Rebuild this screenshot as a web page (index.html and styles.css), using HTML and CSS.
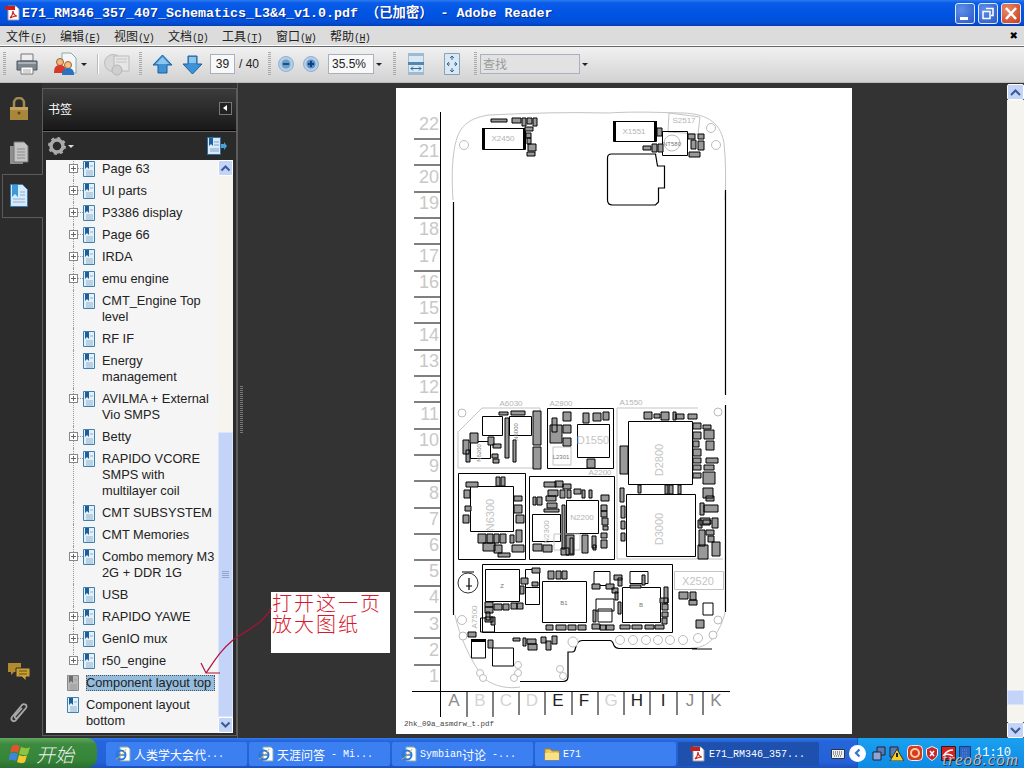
FILE: index.html
```html
<!DOCTYPE html>
<html lang="zh">
<head>
  <meta charset="UTF-8">
  <title>Adobe Reader</title>
  <link rel="stylesheet" href="styles.css">
</head>
<body>

<svg class="defs" width="0" height="0">
  <symbol id="pdf" viewBox="0 0 16 16">
    <path d="M3 1h8l3 3v11H3z" fill="#fff" stroke="#999"/>
    <path d="M0 1h10v4H0z" fill="#c8201c"/>
    <path d="M5 13c2-2 3-5 3-7 0 3 2 5 4 5-3 0-5 1-7 2z" fill="none" stroke="#d0201c" stroke-width="1.2"/>
  </symbol>
  <symbol id="mark" viewBox="0 0 12 16">
    <path d="M.5.5h11v15H.5z" fill="#e4f0f8" stroke="#3f80ad"/>
    <path d="M2 1h4v7L4 6 2 8z" fill="#1c5f9c"/>
    <path d="M7 5h3M3 10h7M3 12h7M3 14h7" stroke="#8db2cf"/>
  </symbol>
  <symbol id="mark-off" viewBox="0 0 12 16">
    <path d="M.5.5h11v15H.5z" fill="#b8b8b8" stroke="#8a8a8a"/>
    <path d="M2 1h4v7L4 6 2 8z" fill="#6c6c6c"/>
    <path d="M7 5h3M3 10h7M3 12h7M3 14h7" stroke="#9a9a9a"/>
  </symbol>
  <symbol id="ie" viewBox="0 0 16 16">
    <path d="M5 1h8l2 2v12H5z" fill="#fff" stroke="#8aa"/>
    <circle cx="6" cy="9" r="4.500" fill="none" stroke="#2a78d8" stroke-width="2"/>
    <path d="M2 9h8" stroke="#2a78d8" stroke-width="1.500"/>
    <path d="M1 13c3-1 8-6 10-10" fill="none" stroke="#e0b030"/>
  </symbol>
</svg>

<div class="titlebar">
  <svg class="title-icon"><use href="#pdf"/></svg>
  <span class="title-text">E71_RM346_357_407_Schematics_L3&amp;4_v1.0.pdf （已加密） - Adobe Reader</span>
  <div class="win-btns">
    <div class="win-btn"><svg width="20" height="21"><path d="M5 14h8v3H5z" fill="#fff"/></svg></div>
    <div class="win-btn"><svg width="20" height="21"><path d="M8 5.500h7v7h-2M5 8.500h7v7H5z" fill="none" stroke="#fff" stroke-width="1.500"/></svg></div>
    <div class="win-btn close"><svg width="20" height="21"><path d="M5 5l10 11M15 5L5 16" stroke="#fff" stroke-width="2.500"/></svg></div>
  </div>
</div>

<div class="menubar">
  <span class="menu">文件<small>(<u>F</u>)</small></span>
  <span class="menu">编辑<small>(<u>E</u>)</small></span>
  <span class="menu">视图<small>(<u>V</u>)</small></span>
  <span class="menu">文档<small>(<u>D</u>)</small></span>
  <span class="menu">工具<small>(<u>T</u>)</small></span>
  <span class="menu">窗口<small>(<u>W</u>)</small></span>
  <span class="menu">帮助<small>(<u>H</u>)</small></span>
  <span class="menu-close">✖</span>
</div>

<div class="toolbar">
  <div class="grip first"></div>
  <svg class="tool print" width="22" height="22" viewBox="0 0 22 22">
    <path d="M5 1h12v7H5z" fill="#eee" stroke="#777"/>
    <path d="M1 8h20v9H1z" fill="#7d8790" stroke="#4c545c"/>
    <path d="M2 9h18v2H2z" fill="#aab2ba"/>
    <path d="M5 14h12v7H5z" fill="#fff" stroke="#777"/>
    <path d="M7 17h8M7 19h8" stroke="#aaa"/>
  </svg>
  <svg class="tool review" width="24" height="24" viewBox="0 0 24 24">
    <path d="M9 1h9l5 5v15H9z" fill="#f4f6fa" stroke="#8aa"/>
    <circle cx="7" cy="10" r="3.500" fill="#f0b878" stroke="#a06030"/>
    <path d="M1 21c0-6 2-8 6-8s6 2 6 8z" fill="#d83828"/>
    <circle cx="15" cy="13" r="3.500" fill="#f4c080" stroke="#a06030"/>
    <path d="M9 23c0-5 2-7 6-7s6 2 6 7z" fill="#2c70c0"/>
  </svg>
  <span class="caret after-review"></span>
  <div class="sep"></div>
  <svg class="tool globe" width="26" height="24" viewBox="0 0 26 24">
    <circle cx="9" cy="11" r="8.500" fill="#d8d8d8" stroke="#bbb"/>
    <path d="M10 4h15v15H10z" fill="#e6e6e6" stroke="#bbb"/>
    <path d="M12 7h11M12 10h11" stroke="#c4c4c4"/>
    <circle cx="13" cy="18" r="5" fill="#cfcfcf" stroke="#b4b4b4"/>
  </svg>
  <div class="grip"></div>
  <svg class="tool nav-up" width="21" height="21" viewBox="0 0 21 21"><path d="M10.500 1L20 11h-5v8H6v-8H1z" fill="#3d93d6" stroke="#1d5f9e"/><path d="M10.500 3L17 10H4z" fill="#8cc6ec"/></svg>
  <svg class="tool nav-down" width="21" height="21" viewBox="0 0 21 21"><path d="M10.500 20L20 10h-5V2H6v8H1z" fill="#3d93d6" stroke="#1d5f9e"/><path d="M7 3h7v6H7z" fill="#8cc6ec"/></svg>
  <div class="field page-no">39</div>
  <span class="page-total">/ 40</span>
  <div class="grip"></div>
  <svg class="tool zoom-out" width="16" height="16" viewBox="0 0 16 16"><circle cx="8" cy="8" r="7.500" fill="#b3cfe8" stroke="#8fb0cc"/><circle cx="8" cy="8" r="4.500" fill="#6e9cc8"/><path d="M5 8h6" stroke="#1d4f80" stroke-width="2"/></svg>
  <svg class="tool zoom-in" width="16" height="16" viewBox="0 0 16 16"><circle cx="8" cy="8" r="7.500" fill="#b3cfe8" stroke="#8fb0cc"/><circle cx="8" cy="8" r="4.500" fill="#5a8cc4"/><path d="M5 8h6M8 5v6" stroke="#123f80" stroke-width="2"/></svg>
  <div class="field zoom-val">35.5%</div>
  <span class="caret after-zoom"></span>
  <div class="grip"></div>
  <svg class="tool fit-width" width="16" height="22" viewBox="0 0 16 22">
    <path d="M.5.5h15v21H.5z" fill="#dbe8f2" stroke="#a8bccc"/>
    <path d="M0 9h16v3H0z" fill="#4f88b4"/>
    <path d="M0 0h16v3H0zM0 19h16v3H0z" fill="#9dbbd2"/>
    <path d="M3 15.500h10M3 15.500l2-2M3 15.500l2 2M13 15.500l-2-2M13 15.500l-2 2" stroke="#2c6a9c" fill="none"/>
  </svg>
  <svg class="tool fit-page" width="16" height="22" viewBox="0 0 16 22">
    <path d="M.5.5h15v21H.5z" fill="#dbe8f2" stroke="#7ea4c2"/>
    <path d="M8 3v4M8 15v4M3 11h3M10 11h3M8 3L6 5M8 3l2 2M8 19l-2-2M8 19l2-2M3 11l2-2M3 11l2 2M13 11l-2-2M13 11l-2 2" stroke="#2c6a9c" fill="none"/>
  </svg>
  <div class="grip"></div>
  <div class="field search">查找</div>
  <span class="caret after-search"></span>
</div>

<div class="workspace">
  <div class="rail">
    <svg class="rail-icon lock" width="20" height="24" viewBox="0 0 20 24">
      <path d="M5 11V6a5 5 0 0 1 10 0v5" fill="none" stroke="#a08a50" stroke-width="2.500"/>
      <path d="M1 10h18v13H1z" fill="#a8863c"/>
      <path d="M1 10h18v3H1z" fill="#c4a45c"/>
      <circle cx="10" cy="16" r="1.500" fill="#5c4818"/>
    </svg>
    <svg class="rail-icon pages" width="20" height="24" viewBox="0 0 20 24">
      <path d="M1 5h11l2 2v16H1z" fill="#8e8e8e"/>
      <path d="M5 1h10l4 4v16H5z" fill="#c4c4c4" stroke="#777"/>
      <path d="M8 8h8M8 11h8M8 14h8M8 17h8" stroke="#8a8a8a"/>
    </svg>
    <div class="rail-tab">
      <svg width="18" height="23" viewBox="0 0 18 23">
        <path d="M.5.500h12l5 5v17H.5z" fill="#d8eafa" stroke="#3a78b0"/>
        <path d="M2 1h6v12l-3-3-3 3z" fill="#3c9ad8"/>
        <path d="M10 8h5M10 11h5M3 15h12M3 18h12" stroke="#8cb0d0"/>
      </svg>
    </div>
    <svg class="rail-icon comment" width="24" height="20" viewBox="0 0 24 20">
      <path d="M1 1h13v9H7l-3 3v-3H1z" fill="#b08a2c"/>
      <path d="M9 6h14v9h-4v4l-4-4H9z" fill="#c8a038" stroke="#2e2e2e"/>
      <path d="M12 9h8M12 12h8" stroke="#6a5010"/>
    </svg>
    <svg class="rail-icon clip" width="20" height="24" viewBox="0 0 20 24">
      <path d="M17 6L7 18c-2 3-6 0-4-3L13 3c2-2 6 0 4 3L8 16c-1 1-3 0-2-2l7-8" fill="none" stroke="#a8a8a8" stroke-width="1.800"/>
    </svg>
  </div>

  <div class="panel">
    <div class="panel-head">
      <span class="panel-title">书签</span>
      <span class="collapse"></span>
    </div>
    <div class="panel-tools">
      <svg width="18" height="18" viewBox="0 0 18 18">
        <circle cx="9" cy="9" r="6" fill="none" stroke="#aaa" stroke-width="3.500"/>
        <circle cx="9" cy="9" r="8" fill="none" stroke="#aaa" stroke-width="2" stroke-dasharray="3 3.300"/>
      </svg>
      <span class="caret light"></span>
      <svg class="export" width="20" height="18" viewBox="0 0 20 18">
        <path d="M.5.500h13v17H.5z" fill="#d8eafa" stroke="#2a6fa8"/>
        <path d="M2 1h4v8L4 7 2 9z" fill="#1c5f9c"/>
        <path d="M7 5h5M7 8h5M3 12h9M3 14h9" stroke="#7fa6c6"/>
        <path d="M14 7h3V5l3 4-3 4v-2h-3z" fill="#4aa0d8"/>
      </svg>
    </div>
    <div class="list">
      <div class="tree">
        <div class="row sub first"><i class="plus"></i><svg class="mk"><use href="#mark"/></svg><span>Page 63</span></div>
        <div class="row sub"><i class="plus"></i><svg class="mk"><use href="#mark"/></svg><span>UI parts</span></div>
        <div class="row sub"><i class="plus"></i><svg class="mk"><use href="#mark"/></svg><span>P3386 display</span></div>
        <div class="row sub"><i class="plus"></i><svg class="mk"><use href="#mark"/></svg><span>Page 66</span></div>
        <div class="row sub"><i class="plus"></i><svg class="mk"><use href="#mark"/></svg><span>IRDA</span></div>
        <div class="row sub"><i class="plus"></i><svg class="mk"><use href="#mark"/></svg><span>emu engine</span></div>
        <div class="row sub"><i class="leaf"></i><svg class="mk"><use href="#mark"/></svg><span>CMT_Engine Top<br>level</span></div>
        <div class="row sub"><i class="leaf"></i><svg class="mk"><use href="#mark"/></svg><span>RF IF</span></div>
        <div class="row sub"><i class="leaf"></i><svg class="mk"><use href="#mark"/></svg><span>Energy<br>management</span></div>
        <div class="row sub"><i class="plus"></i><svg class="mk"><use href="#mark"/></svg><span>AVILMA + External<br>Vio SMPS</span></div>
        <div class="row sub"><i class="plus"></i><svg class="mk"><use href="#mark"/></svg><span>Betty</span></div>
        <div class="row sub"><i class="plus"></i><svg class="mk"><use href="#mark"/></svg><span>RAPIDO VCORE<br>SMPS with<br>multilayer coil</span></div>
        <div class="row sub"><i class="leaf"></i><svg class="mk"><use href="#mark"/></svg><span>CMT SUBSYSTEM</span></div>
        <div class="row sub"><i class="leaf"></i><svg class="mk"><use href="#mark"/></svg><span>CMT Memories</span></div>
        <div class="row sub"><i class="plus"></i><svg class="mk"><use href="#mark"/></svg><span>Combo memory M3<br>2G + DDR 1G</span></div>
        <div class="row sub"><i class="leaf"></i><svg class="mk"><use href="#mark"/></svg><span>USB</span></div>
        <div class="row sub"><i class="plus"></i><svg class="mk"><use href="#mark"/></svg><span>RAPIDO YAWE</span></div>
        <div class="row sub"><i class="plus"></i><svg class="mk"><use href="#mark"/></svg><span>GenIO mux</span></div>
        <div class="row sub end"><i class="plus"></i><svg class="mk"><use href="#mark"/></svg><span>r50_engine</span></div>
        <div class="row top"><svg class="mk"><use href="#mark-off"/></svg><span class="selected">Component layout top</span></div>
        <div class="row top"><svg class="mk"><use href="#mark"/></svg><span>Component layout<br>bottom</span></div>
      </div>
      <div class="vbar small">
        <div class="vbtn"><svg width="11" height="8"><path d="M1.500 6.500l4-4 4 4" fill="none" stroke="#3a5a98" stroke-width="2"/></svg></div>
        <div class="track upper"></div>
        <div class="thumb long"><i></i></div>
        <div class="vbtn"><svg width="11" height="8"><path d="M1.500 1.500l4 4 4-4" fill="none" stroke="#3a5a98" stroke-width="2"/></svg></div>
      </div>
    </div>
  </div>

  <div class="splitter"><div class="dots"></div></div>

  <div class="doc">
    <div class="page">
      <svg class="sheet" width="456" height="646" viewBox="396 88 456 646">
        <g class="rule">
          <path d="M440.500 112V717M414 139h26M414 165h26M414 192h26M414 218h26M414 244h26M414 271h26M414 297h26M414 323h26M414 350h26M414 376h26M414 402h26M414 429h26M414 455h26M414 481h26M414 508h26M414 534h26M414 560h26M414 586h26M414 612h26M414 638h26M414 665h26M412 691.500h318"/>
          <path d="M467 691v26M493 691v26M519 691v24M545 691v24M572 691v24M598 691v24M624 691v24M650 691v24M677 691v24M703 691v24"/>
        </g>
        <g class="rownum">
          <text x="439" y="130">22</text><text x="439" y="157">21</text><text x="439" y="183">20</text><text x="439" y="209">19</text><text x="439" y="235">18</text><text x="439" y="262">17</text><text x="439" y="288">16</text><text x="439" y="314">15</text><text x="439" y="341">14</text><text x="439" y="367">13</text><text x="439" y="393">12</text><text x="439" y="420">11</text><text x="439" y="446">10</text><text x="439" y="472">9</text><text x="439" y="499">8</text><text x="439" y="525">7</text><text x="439" y="551">6</text><text x="439" y="577">5</text><text x="439" y="603">4</text><text x="439" y="630">3</text><text x="439" y="656">2</text><text x="439" y="682">1</text>
        </g>
        <g class="colname">
          <text x="454" y="706" class="mid">A</text><text x="480" y="706">B</text><text x="506" y="706">C</text><text x="532" y="706">D</text><text x="558" y="706" class="dark">E</text><text x="584" y="706" class="dark">F</text><text x="611" y="706">G</text><text x="637" y="706" class="dark">H</text><text x="663" y="706" class="dark">I</text><text x="690" y="706" class="mid">J</text><text x="716" y="706" class="mid">K</text>
        </g>
        <text class="sheet-name" x="404" y="726">2hk_09a_asmdrw_t.pdf</text>

        <path class="outline" d="M453 200c-2-30 0-50 4-62 4-12 12-20 32-23 40-2 80-3 120-2 30-2 60 0 75 0 18 1 36 6 40 30 2 20 2 40 1 57M455 615c4 20 16 48 30 64 10 8 25 10 35 8M725 612c-2 10-6 18-12 26-6 8-14 10-22 10"/>
        <path class="line" d="M453.500 202V615M725.500 190V395M725.500 405V612M520 681.500h43c4 0 5-2 5-5V652h4c3 0 3-2 4-6 1-3 2-5 6-5.500h28c3 0 3 3 4 5 1 2 2 3 5 3h78M692 649h20"/>
        <path class="line" d="M607.500 158c0-3 1-4 4-4h44l2 12h7v22h-6v14l-3 3h-43c-3 0-5-2-5-5z"/>
        <path class="outline" d="M669 113l31 4-2 17-30-2z"/>
        <text class="part" x="684" y="123">S2517</text>

        <!-- mounting holes -->
        <g class="hole">
          <circle cx="464" cy="145" r="4.500"/><circle cx="711" cy="128" r="4.500"/><circle cx="716" cy="145" r="4.500"/><circle cx="462" cy="413" r="4"/><circle cx="718" cy="412" r="4"/><circle cx="462" cy="620" r="4.500"/><circle cx="463" cy="636" r="4"/><circle cx="718" cy="620" r="4"/><circle cx="713" cy="635" r="4"/><circle cx="620" cy="640" r="4.500"/><circle cx="633" cy="640" r="4.500"/><circle cx="646" cy="640" r="4.500"/><circle cx="658" cy="640" r="4.500"/><circle cx="670" cy="640" r="4.500"/><circle cx="683" cy="640" r="4.500"/><circle cx="698" cy="638" r="4.500"/><circle cx="560" cy="669" r="3.500"/><circle cx="563" cy="676" r="3.500"/><circle cx="518" cy="665" r="3.500"/><circle cx="518" cy="673" r="3.500"/><circle cx="514" cy="678" r="3.500"/><circle cx="480" cy="673" r="3.500"/><circle cx="483" cy="678" r="3.500"/><circle cx="573" cy="642" r="5"/>
        </g>

        <!-- frames -->
        <path class="outline" d="M482 408h58v60h-82v-36zM617 408v151h106M617 408h81"/>
        <g class="frame">
          <path d="M547.500 408.500h66v60h-66zM458.500 473.500h67v86h-67zM529.500 476.500h85v83h-85zM482.500 564.500h190v68h-190z"/>
          <path d="M628.500 421.500h64v63h-64zM626.500 494.500h69v62h-69zM577.500 424.500h32v33h-32zM470.500 486.500h43v45h-43zM566.500 500.500h32v33h-32zM532.500 514.500h28v27h-28zM485.500 569.500h34v32h-34zM525.500 569.500h14v18h-14zM525.500 587.500h14v17h-14zM542.500 581.500h44v41h-44zM622.500 587.500h38v35h-38z"/>
          <path d="M482.500 128.500h43v21h-43zM613.500 121.500h43v20h-43zM662.500 131.500h25v24h-25zM509.500 416.500h22v19h-22zM470.500 441.500h20v17h-20zM482.500 416.500h20v19h-20z"/>
          <path d="M594 571.500h16v14h-16zM630 571.500h18v12h-18zM596 599h18v12h-18zM598 609h14v13h-14zM480.500 618h14v14h-14zM471.500 640h14v18h-14zM492.500 648h21v18h-21zM703 603h10v12h-10z"/>
        </g>
        <path class="thick" d="M483.500 128v21M524.500 128v21M614.500 121v20M655.500 121v20M471 640.500h15"/>
        <circle class="hole" cx="672" cy="143" r="8"/>
        <path class="outline" d="M674.500 571.500h49v18h-49zM554 534h26v16h-26zM553 447h18v18h-18z"/>
        <circle class="battery" cx="468" cy="583" r="10"/>
        <path class="line" d="M462 572h12M466 586h6M469 578v12"/>

        <!-- small parts -->
        <path class="smd" d="M491 119h16v3h-16zM512 118h9v5h-9zM522 118h4v8h-4zM527 118h5v6h-5zM533 118h4v8h-4zM525 127h8v4h-8zM526 133h5v5h-5zM527 138h4v6h-4zM528 144h8v7h-8zM527 152h8v4h-8zM657 128h5v8h-5zM643 146h8v4h-8zM652 144h5v8h-5zM658 144h5v8h-5zM688 134h7v5h-7zM698 134h6v5h-6zM691 140h5v9h-5zM698 141h6v9h-6zM689 152h11v5h-11z"/>
        <path class="smd" d="M499 412h9v3h-9zM511 411h14v4h-14zM533 411h8v34h-8zM505 418h4v40h-4zM513 440h3v22h-3zM533 447h8v22h-8zM470 433h8v10h-8zM488 437h6v8h-6zM463 440h6v14h-6zM466 450h4v12h-4zM493 444h8v4h-8zM492 454h6v4h-6zM493 459h6v4h-6zM552 418h5v14h-5zM563 412h8v9h-8zM583 413h6v10h-6zM593 413h8v8h-8zM603 412h6v8h-6zM550 425h12v18h-12zM563 425h8v8h-8zM563 438h8v8h-8zM587 459h8v9h-8z"/>
        <path class="smd" d="M644 412h8v7h-8zM654 414h6v4h-6zM661 412h8v8h-8zM673 412h3v8h-3zM676 414h8v5h-8zM688 414h9v5h-9zM620 446h8v28h-8zM693 423h8v6h-8zM693 432h8v7h-8zM693 441h6v6h-6zM693 449h8v7h-8zM693 458h8v5h-8zM693 465h8v5h-8zM693 473h8v5h-8zM703 425h8v4h-8zM704 430h10v9h-10zM706 441h8v9h-8zM706 458h12v5h-12zM704 465h10v5h-10zM703 472h12v12h-12zM703 488h10v10h-10zM706 496h8v5h-8zM704 505h14v7h-14zM700 503h4v12h-4zM700 518h10v7h-10zM703 520h8v4h-8zM698 520h4v8h-4zM712 518h6v10h-6zM699 530h6v16h-6zM706 530h8v5h-8zM708 536h6v6h-6zM698 545h10v14h-10zM712 542h8v14h-8zM620 488h4v14h-4zM621 506h4v12h-4zM621 521h4v8h-4zM621 533h4v8h-4zM638 485h3v8h-3zM665 485h3v9h-3zM669 485h4v9h-4zM678 485h3v9h-3z"/>
        <path class="smd" d="M496 477h4v9h-4zM501 477h4v9h-4zM466 482h12v5h-12zM464 490h6v8h-6zM465 506h6v5h-6zM463 515h6v8h-6zM514 496h8v5h-8zM514 505h8v8h-8zM516 515h8v8h-8zM478 534h8v9h-8zM487 534h6v9h-6zM494 534h5v9h-5zM500 534h6v9h-6zM483 543h12v8h-12zM494 545h8v8h-8zM498 553h12v4h-12zM510 535h4v8h-4zM516 530h6v12h-6zM512 545h12v7h-12z"/>
        <path class="smd" d="M544 482h12v5h-12zM555 481h8v6h-8zM563 484h8v5h-8zM548 490h10v6h-10zM560 490h5v8h-5zM567 490h4v8h-4zM574 489h7v5h-7zM582 490h3v8h-3zM589 490h3v8h-3zM537 497h5v8h-5zM533 497h3v8h-3zM546 496h10v5h-10zM547 503h10v5h-10zM544 509h15v3h-15zM562 505h3v44h-3zM601 495h8v6h-8zM601 505h6v6h-6zM601 511h6v6h-6zM602 518h6v7h-6zM603 526h5v4h-5zM601 533h6v5h-6zM601 540h6v8h-6zM592 536h4v12h-4zM566 535h8v20h-8zM570 538h3v16h-3zM582 535h6v18h-6zM593 545h3v5h-3zM533 544h9v7h-9zM543 545h9v7h-9zM561 548h8v7h-8z"/>
        <path class="smd" d="M521 578h7v6h-7zM532 582h6v4h-6zM520 586h4v8h-4zM485 602h8v5h-8zM485 607h8v6h-8zM494 604h8v6h-8zM503 604h6v6h-6zM511 603h6v6h-6zM517 603h6v6h-6zM486 612h4v8h-4zM485 617h8v5h-8zM491 617h4v8h-4zM532 568h8v5h-8zM548 571h6v8h-6zM556 571h5v8h-5zM562 571h5v8h-5zM546 625h7v5h-7zM556 625h10v5h-10zM568 625h8v5h-8zM578 625h8v5h-8zM592 584h8v5h-8zM606 584h8v5h-8zM593 610h3v12h-3zM618 578h4v8h-4zM612 588h6v5h-6zM615 592h3v8h-3zM618 602h3v12h-3zM592 624h8v5h-8zM600 625h6v5h-6zM606 625h8v5h-8zM620 625h10v4h-10zM632 625h10v4h-10zM645 625h9v4h-9zM655 625h9v4h-9zM660 598h8v5h-8zM662 604h6v6h-6zM662 612h6v5h-6zM662 618h5v6h-5zM614 575h8v5h-8zM630 585h11v3h-11zM642 575h3v10h-3zM664 587h4v16h-4z"/>
        <path class="smd" d="M468 632h8v5h-8zM488 640h5v8h-5zM513 638h7v3h-7zM523 638h3v8h-3zM527 639h9v5h-9zM528 644h9v6h-9zM541 637h5v6h-5zM546 641h5v9h-5zM552 636h5v8h-5zM679 592h9v7h-9zM690 592h6v8h-6zM689 600h8v5h-8zM696 620h8v8h-8z"/>

        <!-- gray labels -->
        <text class="part" x="511" y="406">A6030</text>
        <text class="part" x="561" y="406">A2800</text>
        <text class="part" x="631" y="405">A1550</text>
        <text class="part" x="600" y="475">A2200</text>
        <text class="part big" x="593" y="444">D1550</text>
        <text class="part small" x="561" y="459">L2301</text>
        <text class="part big" x="663" y="460" transform="rotate(-90 663 460)">D2800</text>
        <text class="part big" x="663" y="529" transform="rotate(-90 663 529)">D3000</text>
        <text class="part big" x="494" y="515" transform="rotate(-90 494 515)">N6300</text>
        <text class="part" x="582" y="520">N2200</text>
        <text class="part" x="549" y="532" transform="rotate(-90 549 532)">N2300</text>
        <text class="part small" x="481" y="453" transform="rotate(-90 481 453)">N6200</text>
        <text class="part small" x="518" y="432" transform="rotate(-90 518 432)">N6000</text>
        <text class="part" x="503" y="141">X2450</text>
        <text class="part" x="634" y="134">X1551</text>
        <text class="part small" x="672" y="146">NT580</text>
        <text class="part big" x="698" y="585">X2520</text>
        <text class="part" x="477" y="617" transform="rotate(-90 477 617)">A7500</text>
        <text class="part small" x="502" y="588">Z</text>
        <text class="part small" x="564" y="605">B1</text>
        <text class="part small" x="641" y="607">B</text>
      </svg>
    </div>
  </div>

  <div class="vbar big">
    <div class="vbtn"><svg width="13" height="9"><path d="M2 7l4.500-4.500L11 7" fill="none" stroke="#3a5a98" stroke-width="2"/></svg></div>
    <div class="track"></div>
    <div class="thumb tiny"></div>
    <div class="track end"></div>
    <div class="vbtn"><svg width="13" height="9"><path d="M2 2l4.500 4.500L11 2" fill="none" stroke="#3a5a98" stroke-width="2"/></svg></div>
  </div>

  <div class="note">打开这一页<br>放大图纸</div>
  <svg class="note-arrow" width="80" height="76" viewBox="196 604 80 76">
    <path d="M271 608c-6 14-24 22-38 32-12 10-18 20-27 33M201 663l5 10 14 0" fill="none" stroke="#b0103a" stroke-width="1.200"/>
  </svg>
</div>

<div class="taskbar">
  <div class="start">
    <svg width="24" height="22" viewBox="0 0 24 22">
      <path d="M3 4c3-2 5-1 8 0l-2 7c-2-1-5-2-8 0z" fill="#e0562a"/>
      <path d="M12 5c3 1 6 2 9 0l-2 7c-3 2-6 1-9 0z" fill="#8cc63e"/>
      <path d="M1 12c3-2 5-1 8 0l-2 7c-3-1-5-2-8 0z" fill="#3e86dc"/>
      <path d="M10 13c3 1 5 2 8 0l-2 7c-3 2-5 1-8 0z" fill="#f4c830"/>
    </svg>
    <span>开始</span>
  </div>
  <div class="task first-task"><svg class="task-icon"><use href="#ie"/></svg><span class="zh">人类学大会代</span><span>...</span></div>
  <div class="task"><svg class="task-icon"><use href="#ie"/></svg><span class="zh">天涯问答</span><span> - Mi...</span></div>
  <div class="task"><svg class="task-icon"><use href="#ie"/></svg><span>Symbian</span><span class="zh">讨论</span><span> -...</span></div>
  <div class="task"><svg class="task-icon" viewBox="0 0 16 16"><path d="M1 3h5l2 2h7v9H1z" fill="#f0c850" stroke="#b08a28"/><path d="M1 7h14v7H1z" fill="#f8e088"/></svg><span>E71</span></div>
  <div class="task active"><svg class="task-icon"><use href="#pdf"/></svg><span>E71_RM346_357...</span></div>
  <svg class="kbd" width="14" height="12" viewBox="0 0 14 12"><path d="M.5 2.500h13v9H.5z" fill="#eee" stroke="#333"/><path d="M2 5h10M2 7h10M3 9h8" stroke="#444" stroke-dasharray="1 1"/></svg>
  <div class="tray">
    <div class="tray-toggle"><svg width="10" height="10"><path d="M6.500 1.500L3 5l3.500 3.500" fill="none" stroke="#2a78d8" stroke-width="2.200"/></svg></div>
    <svg width="14" height="15" viewBox="0 0 14 15"><path d="M5 1h8v8H5z" fill="#5a7ab8" stroke="#223"/><path d="M1 6h8v8H1z" fill="#8aa6d8" stroke="#223"/></svg>
    <svg width="15" height="15" viewBox="0 0 15 15"><path d="M1 1h8v10H1z" fill="#5a7ab8" stroke="#223"/><path d="M8 3l7 12H1z" fill="#f4d020" stroke="#333"/><path d="M8 7v4" stroke="#222" stroke-width="2"/></svg>
    <svg width="16" height="16" viewBox="0 0 16 16"><rect x=".5" y=".5" width="15" height="15" rx="4" fill="#d83a20" stroke="#eee"/><circle cx="8" cy="8" r="4" fill="none" stroke="#f8d0a0" stroke-width="2"/></svg>
    <svg width="12" height="15" viewBox="0 0 12 15"><path d="M6 .5L11.500 3v5c0 3-3 5-5.500 6.500C3.500 13 .5 11 .5 8V3z" fill="#c82828" stroke="#f0f0f0"/><path d="M4 5l4 5M8 5l-4 5" stroke="#fff" stroke-width="1.500"/></svg>
    <svg width="15" height="15" viewBox="0 0 15 15"><path d="M.5.5h14v14H.5z" fill="#d82020" stroke="#222"/><path d="M12 4C8 4 5 6 3 9c3-1 6-1 9 1" fill="none" stroke="#fff" stroke-width="1.500"/></svg>
    <svg width="12" height="14" viewBox="0 0 12 14"><path d="M.5.5h11v13H.5z" fill="#2c66c0" stroke="#1a3c80"/><path d="M3 4h6M3 7h6M3 10h6" stroke="#5a90e0" stroke-dasharray="1 1"/></svg>
    <span class="clock">11:10</span>
  </div>
  <span class="watermark">treo8.com</span>
</div>

</body>
</html>
```

FILE: styles.css
```css
* {
  box-sizing: border-box;
}

body {
  margin: 0;
  width: 1024px;
  height: 768px;
  overflow: hidden;
  display: flex;
  flex-direction: column;
  background: #333;
  font-family: "Liberation Sans", "Noto Sans CJK SC", sans-serif;
  font-size: 12.8px;
  color: #222;
}

.defs {
  position: absolute;
}

/* title bar */
.titlebar {
  height: 26px;
  display: flex;
  align-items: center;
  padding-left: 5px;
  background: linear-gradient(#2b7bf0 0, #0a5ce8 3px, #0054e3 14px, #0450d8 22px, #0340b8 26px);
}

.title-icon {
  width: 16px;
  height: 16px;
}

.title-text {
  margin: 0 0 4px 1px;
  font-family: "Liberation Mono", "Noto Sans CJK SC", monospace;
  font-weight: bold;
  font-size: 13.33px;
  color: #fff;
  white-space: pre;
  text-shadow: 1px 1px #0a2c90;
}

.win-btns {
  margin-left: auto;
  margin-right: 3px;
  display: flex;
  gap: 3px;
}

.win-btn {
  width: 20px;
  height: 21px;
  border: 1px solid #dfe8fb;
  border-radius: 3px;
  background: radial-gradient(circle at 30% 30%, #5d8fe8, #2a58c8);
  overflow: hidden;
}

.win-btn svg {
  display: block;
  margin: -1px;
}

.win-btn.close {
  background: radial-gradient(circle at 30% 30%, #e88a68, #c83c18);
}

/* menu */
.menubar {
  height: 19px;
  display: flex;
  align-items: center;
  gap: 14px;
  padding-left: 6px;
  background: #dcdcdc;
  font-family: "Noto Sans CJK SC", sans-serif;
  font-size: 12px;
  color: #222;
}

.menu {
  width: 40px;
  white-space: nowrap;
}

.menu small {
  font-family: "Liberation Mono", monospace;
  font-size: 10px;
  letter-spacing: -0.6px;
}

.menu-close {
  margin-left: auto;
  margin-right: 6px;
  font-family: "DejaVu Sans", sans-serif;
  font-size: 10px;
  color: #000;
}

/* toolbar */
.toolbar {
  height: 38px;
  display: flex;
  align-items: center;
  padding-left: 3px;
  border-top: 1px solid #fff;
  border-bottom: 1px solid #bbb;
  box-shadow: inset 0 1px #666;
  background: linear-gradient(#f2f2f2, #d2d2d2);
  font-size: 12px;
}

.grip {
  width: 3px;
  height: 24px;
  background: repeating-linear-gradient(#aaa 0 1px, transparent 1px 2px);
}

.tool {
  flex: none;
}

.print { margin-left: 10px; }
.review { margin-left: 15px; }
.after-review { margin-left: 4px; }
.sep {
  width: 1px;
  height: 20px;
  margin-left: 10px;
  background: #bbb;
  box-shadow: 1px 0 #fff;
}
.globe { margin: 0 9px 0 6px; }
.nav-up { margin-left: 10px; }
.nav-down { margin-left: 9px; }
.page-no { margin-left: 7px; width: 25px; text-align: center; }
.page-total { margin: 0 9px 0 4px; }
.zoom-out { margin-left: 7px; }
.zoom-in { margin-left: 9px; }
.zoom-val { margin-left: 9px; width: 46px; padding-left: 3px; }
.after-zoom { margin: 0 11px 0 2px; }
.fit-width { margin-left: 12px; }
.fit-page { margin: 0 14px 0 20px; }
.search {
  width: 100px;
  margin-left: 3px;
  padding-left: 2px;
  background: #e2e2e2;
  color: #9a9a9a;
  font-family: "Noto Sans CJK SC", sans-serif;
}
.after-search { margin-left: 2px; }

.field {
  flex: none;
  height: 20px;
  line-height: 18px;
  border: 1px solid #a9b2bc;
}

.page-no,
.zoom-val {
  background: #f8f8f8;
}

.caret {
  flex: none;
  width: 0;
  height: 0;
  border: 3px solid transparent;
  border-top: 3px solid #222;
  border-bottom: 0;
}

.caret.light {
  border-top-color: #ddd;
  margin-left: 2px;
}

/* main area */
.workspace {
  position: relative;
  flex: 1;
  display: flex;
  min-height: 0;
  background: #333;
}

.rail {
  flex: none;
  width: 42px;
  display: flex;
  flex-direction: column;
  background: #2c2c2c;
}

.rail-icon {
  flex: none;
}

.lock { margin: 14px 0 0 9px; }
.pages { margin: 20px 0 0 9px; }

.rail-tab {
  position: relative;
  z-index: 1;
  width: 41px;
  height: 44px;
  margin: 9px 0 0 2px;
  padding: 9px 0 0 7px;
  border: 1px solid #5a5a5a;
  border-right: 0;
  background: #2c2c2c;
}

.comment { margin: auto 0 0 7px; }
.clip { margin: 20px 0 12px 9px; }

/* bookmarks panel */
.panel {
  flex: none;
  width: 195px;
  margin: 5px 0 2px;
  display: flex;
  flex-direction: column;
  border: 1px solid #5c5c5c;
  background: #2a2a2a;
}

.panel-head {
  height: 42px;
  flex: none;
  display: flex;
  align-items: center;
  padding: 0 4px 2px 5px;
  border-bottom: 1px solid #000;
  background: linear-gradient(#3c3c3c, #191919);
}

.panel-title {
  font-family: "Noto Sans CJK SC", sans-serif;
  font-size: 12px;
  color: #fff;
}

.collapse {
  position: relative;
  margin-left: auto;
  width: 13px;
  height: 13px;
  border: 1px solid #777;
  background: #222;
}

.collapse::after {
  content: "";
  position: absolute;
  left: 3px;
  top: 2px;
  border: 3px solid transparent;
  border-right: 4px solid #fff;
  border-left: 0;
}

.panel-tools {
  height: 29px;
  flex: none;
  display: flex;
  align-items: center;
  padding: 0 9px 0 5px;
  border-top: 1px solid #666;
}

.export {
  margin-left: auto;
}

.list {
  flex: 1;
  min-height: 0;
  display: flex;
  margin: 0 3px 2px 3px;
  background: #f5f5f5;
}

.tree {
  flex: 1;
  overflow: hidden;
}

.row {
  position: relative;
  display: flex;
  padding: 3px 0;
  line-height: 16px;
  white-space: nowrap;
}

.row.first {
  margin-top: -2px;
}

.row.sub::before {
  content: "";
  position: absolute;
  left: 27px;
  top: 0;
  bottom: 0;
  border-left: 1px dotted #999;
}

.row.end::before {
  bottom: 11px;
}

.plus,
.leaf {
  position: relative;
  flex: none;
  width: 9px;
  height: 9px;
  margin: 3px 5px 0 23px;
}

.plus {
  border: 1px solid #888;
  background: linear-gradient(#666, #666) center / 5px 1px no-repeat,
    linear-gradient(#666, #666) center / 1px 5px no-repeat,
    #fff;
}

.plus::after {
  content: "";
  position: absolute;
  left: 8px;
  top: 3px;
  width: 5px;
  border-top: 1px dotted #999;
}

.mk {
  flex: none;
  width: 12px;
  height: 16px;
  margin-right: 7px;
}

.row.top .mk {
  margin-left: 21px;
}

.selected {
  padding: 0 4px 0 0;
  background: #93bcdd;
  outline: 1px dotted #555;
  outline-offset: -1px;
}

/* scroll bars */
.vbar {
  flex: none;
  display: flex;
  flex-direction: column;
}

.vbar.small {
  width: 15px;
}

.vbar.big {
  width: 17px;
  margin-top: 1px;
}

.vbtn {
  flex: none;
  height: 16px;
  display: flex;
  align-items: center;
  justify-content: center;
  border: 1px solid #fff;
  border-radius: 2px;
  background: #c4d4f6;
}

.track {
  flex: 1;
  background: #f6f4ef;
}

.track.upper {
  flex: none;
  height: 256px;
}

.track.end {
  flex: none;
  height: 17px;
}

.thumb {
  background: #c3d4f8;
  border: 1px solid #dbe6fb;
}

.thumb.long {
  flex: 1;
  position: relative;
}

.thumb.long i {
  position: absolute;
  left: 3px;
  top: 138px;
  width: 7px;
  height: 7px;
  background: repeating-linear-gradient(#8ea6d0 0 1px, transparent 1px 2px);
}

.thumb.tiny {
  flex: none;
  height: 15px;
}

.splitter {
  flex: none;
  width: 5px;
  border-left: 1px solid #5c5c5c;
}

.dots {
  width: 3px;
  height: 47px;
  margin: 303px 0 0 2px;
  background: repeating-linear-gradient(#777 0 1px, transparent 1px 2px);
}

/* document */
.doc {
  flex: 1;
  padding: 5px 0 0 154px;
}

.page {
  width: 456px;
  height: 646px;
  background: #fff;
}

.sheet {
  display: block;
}

.rule,
.line,
.frame {
  fill: none;
  stroke: #000;
  stroke-width: 1;
}

.line {
  stroke-width: 1.2;
}

.outline {
  fill: none;
  stroke: #c4c4c4;
}

.hole {
  fill: #fff;
  stroke: #bcbcbc;
}

.battery {
  fill: #fff;
  stroke: #333;
}

.thick {
  fill: none;
  stroke: #000;
  stroke-width: 3;
}

.smd {
  fill: #999;
  stroke: #000;
  stroke-width: 1;
}

.rownum text {
  font-size: 18px;
  font-family: "Liberation Sans", sans-serif;
  text-anchor: end;
  fill: #c8c8c8;
}

.colname text {
  font-size: 17px;
  font-family: "Liberation Sans", sans-serif;
  text-anchor: middle;
  fill: #d4d4d4;
}

.colname .mid {
  fill: #8a8a8a;
}

.colname .dark {
  fill: #222;
}

.sheet-name {
  font-family: "Liberation Mono", monospace;
  font-size: 7.500px;
  fill: #444;
}

.part {
  font-size: 8px;
  font-family: "Liberation Sans", sans-serif;
  text-anchor: middle;
  fill: #b4b4b4;
}

.part.big {
  font-size: 11px;
  fill: #c4c4c4;
}

.part.small {
  font-size: 6px;
  fill: #777;
}

/* hand-drawn note over the screenshot */
.note {
  position: absolute;
  left: 271px;
  top: 509px;
  width: 119px;
  height: 61px;
  padding: 0 0 0 1px;
  background: #fff;
  font-family: "Noto Sans CJK SC", sans-serif;
  font-weight: 300;
  font-size: 20px;
  line-height: 21px;
  letter-spacing: 2px;
  color: #d8182c;
}

.note-arrow {
  position: absolute;
  left: 196px;
  top: 521px;
}

/* taskbar */
.taskbar {
  position: relative;
  height: 30px;
  flex: none;
  display: flex;
  align-items: center;
  background: linear-gradient(#2f7bec 0, #2565dc 3px, #2461d8 24px, #1c50c0 30px);
  color: #fff;
}

.start {
  width: 97px;
  height: 30px;
  display: flex;
  align-items: center;
  gap: 3px;
  padding-left: 9px;
  border-radius: 0 10px 10px 0;
  background: linear-gradient(#5fa85c 0, #3d8a3f 6px, #358438 22px, #2a6e30 30px);
}

.start span {
  font-family: "Noto Sans CJK SC", sans-serif;
  font-style: italic;
  font-weight: 300;
  font-size: 19px;
  color: #f0f0f0;
}

.task {
  flex: none;
  width: 141px;
  height: 24px;
  margin: 2px 1px 0 1px;
  display: flex;
  align-items: center;
  padding-left: 9px;
  border-radius: 2px;
  background: #3c7ff0;
  font-family: "Liberation Mono", monospace;
  font-size: 10px;
  white-space: pre;
  overflow: hidden;
}

.first-task {
  margin-left: 9px;
}

.task.active {
  background: #1e50ae;
  margin-left: 1px;
  padding-left: 12px;
}

.task .zh {
  font-family: "Noto Sans CJK SC", sans-serif;
  font-size: 12px;
}

.task-icon {
  flex: none;
  width: 16px;
  height: 16px;
  margin-right: 3px;
}

.kbd {
  margin-left: 11px;
}

.tray {
  margin-left: auto;
  height: 30px;
  width: 167px;
  display: flex;
  align-items: center;
  gap: 3px;
  background: linear-gradient(#1aa0f0, #0f8ae4);
  border-left: 1px solid #0c5fb8;
}

.tray-toggle {
  width: 17px;
  height: 17px;
  margin: 0 3px 0 -9px;
  display: flex;
  align-items: center;
  justify-content: center;
  border-radius: 50%;
  background: #fff;
}

.clock {
  margin-left: 1px;
  font-family: "Liberation Mono", monospace;
  font-size: 12px;
}

.watermark {
  position: absolute;
  right: 5px;
  top: 12px;
  font-family: "Liberation Serif", serif;
  font-style: italic;
  font-size: 17px;
  letter-spacing: 1px;
  color: #b8c0c8;
  text-shadow: 1px 1px #333;
}
```
